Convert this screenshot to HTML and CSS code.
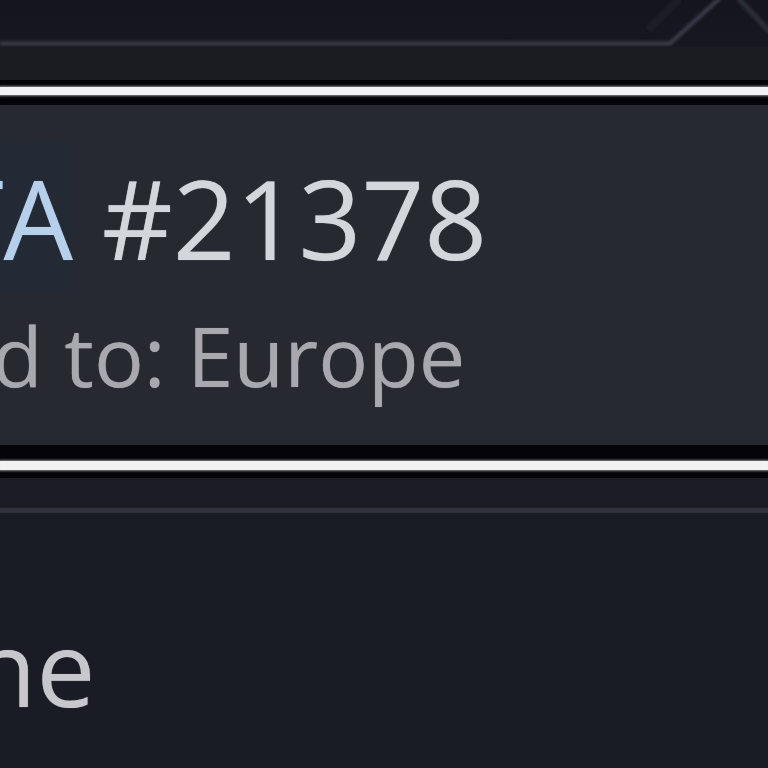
FILE: index.html
```html
<!DOCTYPE html>
<html>
<head>
<meta charset="utf-8">
<link rel="stylesheet" href="styles.css">
</head>
<body>
<div class="page">
  <div class="tabbar">
    <svg class="tabline" width="768" height="47" viewBox="0 0 768 47">
      <defs>
        <filter id="soft" x="-10%" y="-50%" width="120%" height="200%"><feGaussianBlur stdDeviation="1.4"/></filter>
      </defs>
      <path d="M0 43.5 H670 L720 -2" fill="none" stroke="#3b3c48" stroke-width="4" filter="url(#soft)"/>
      <path d="M738 -2 L770 32" fill="none" stroke="#2c2d38" stroke-width="5" filter="url(#soft)"/>
      <path d="M648 30 L680 -2" fill="none" stroke="#1c1d27" stroke-width="8" filter="url(#soft)"/>
    </svg>
  </div>
  <div class="strip"></div>
  <div class="rule"><div class="rule-light"></div></div>
  <section class="card">
    <div class="title"><span class="code">TA</span> #21378</div>
    <div class="sub">d to: Europe</div>
  </section>
  <div class="rule rule-b"><div class="rule-light"></div></div>
  <div class="strip2"></div>
  <div class="divider"></div>
  <section class="lower">
    <div class="label">ne</div>
  </section>
</div>
</body>
</html>
```
FILE: styles.css
```css
html, body {
  margin: 0;
  padding: 0;
  background: #1b1c24;
  overflow: hidden;
}
.page {
  width: 768px;
  height: 768px;
  display: flex;
  flex-direction: column;
  font-family: "Open Sans", "Noto Sans", sans-serif;
  overflow: hidden;
}
.tabbar {
  height: 47px;
  background: linear-gradient(#14151d, #16171f);
  flex: none;
}
.tabline {
  display: block;
}
.strip {
  height: 33px;
  background: #1b1c21;
  flex: none;
}
.rule {
  height: 25px;
  flex: none;
  background: #040409;
  display: flex;
  flex-direction: column;
  padding-top: 7px;
  box-sizing: border-box;
}
.rule-light {
  height: 8px;
  background: #f2f2f4;
  box-shadow: 0 0 2px 1px #8a8b90;
}
.rule-b {
  height: 33px;
  padding-top: 16px;
}
.rule-b .rule-light {
  height: 9px;
}
.card {
  height: 340px;
  flex: none;
  background: #262930;
  padding-top: 57px;
  box-sizing: border-box;
  overflow: hidden;
}
.title {
  font-size: 110px;
  line-height: 110px;
  color: #d3d6db;
  margin-left: -57px;
  white-space: nowrap;
  text-shadow: 0 0 1px rgba(211, 214, 219, 0.6);
}
.code {
  color: #b6cfeb;
  background: linear-gradient(90deg, rgba(30,44,62,0) 0%, rgba(30,44,62,0.45) 50%, rgba(30,44,62,0.25) 100%);
  text-shadow: 0 0 1px rgba(182, 207, 235, 0.6);
}
.sub {
  font-size: 83px;
  line-height: 83px;
  color: #a7a9ae;
  margin-top: 41px;
  margin-left: -8px;
  white-space: nowrap;
  text-shadow: 0 0 1px rgba(167, 169, 174, 0.6);
}
.strip2 {
  height: 30px;
  flex: none;
  background: #1c1d24;
}
.divider {
  height: 5px;
  flex: none;
  background: #30313b;
  box-shadow: 0 0 2px #2a2b34;
}
.lower {
  flex: 1;
  background: #1a1c25;
  padding-top: 101px;
}
.label {
  font-size: 105px;
  line-height: 105px;
  color: #c6c8cd;
  margin-left: -28px;
  white-space: nowrap;
  text-shadow: 0 0 1px rgba(198, 200, 205, 0.6);
}
```
